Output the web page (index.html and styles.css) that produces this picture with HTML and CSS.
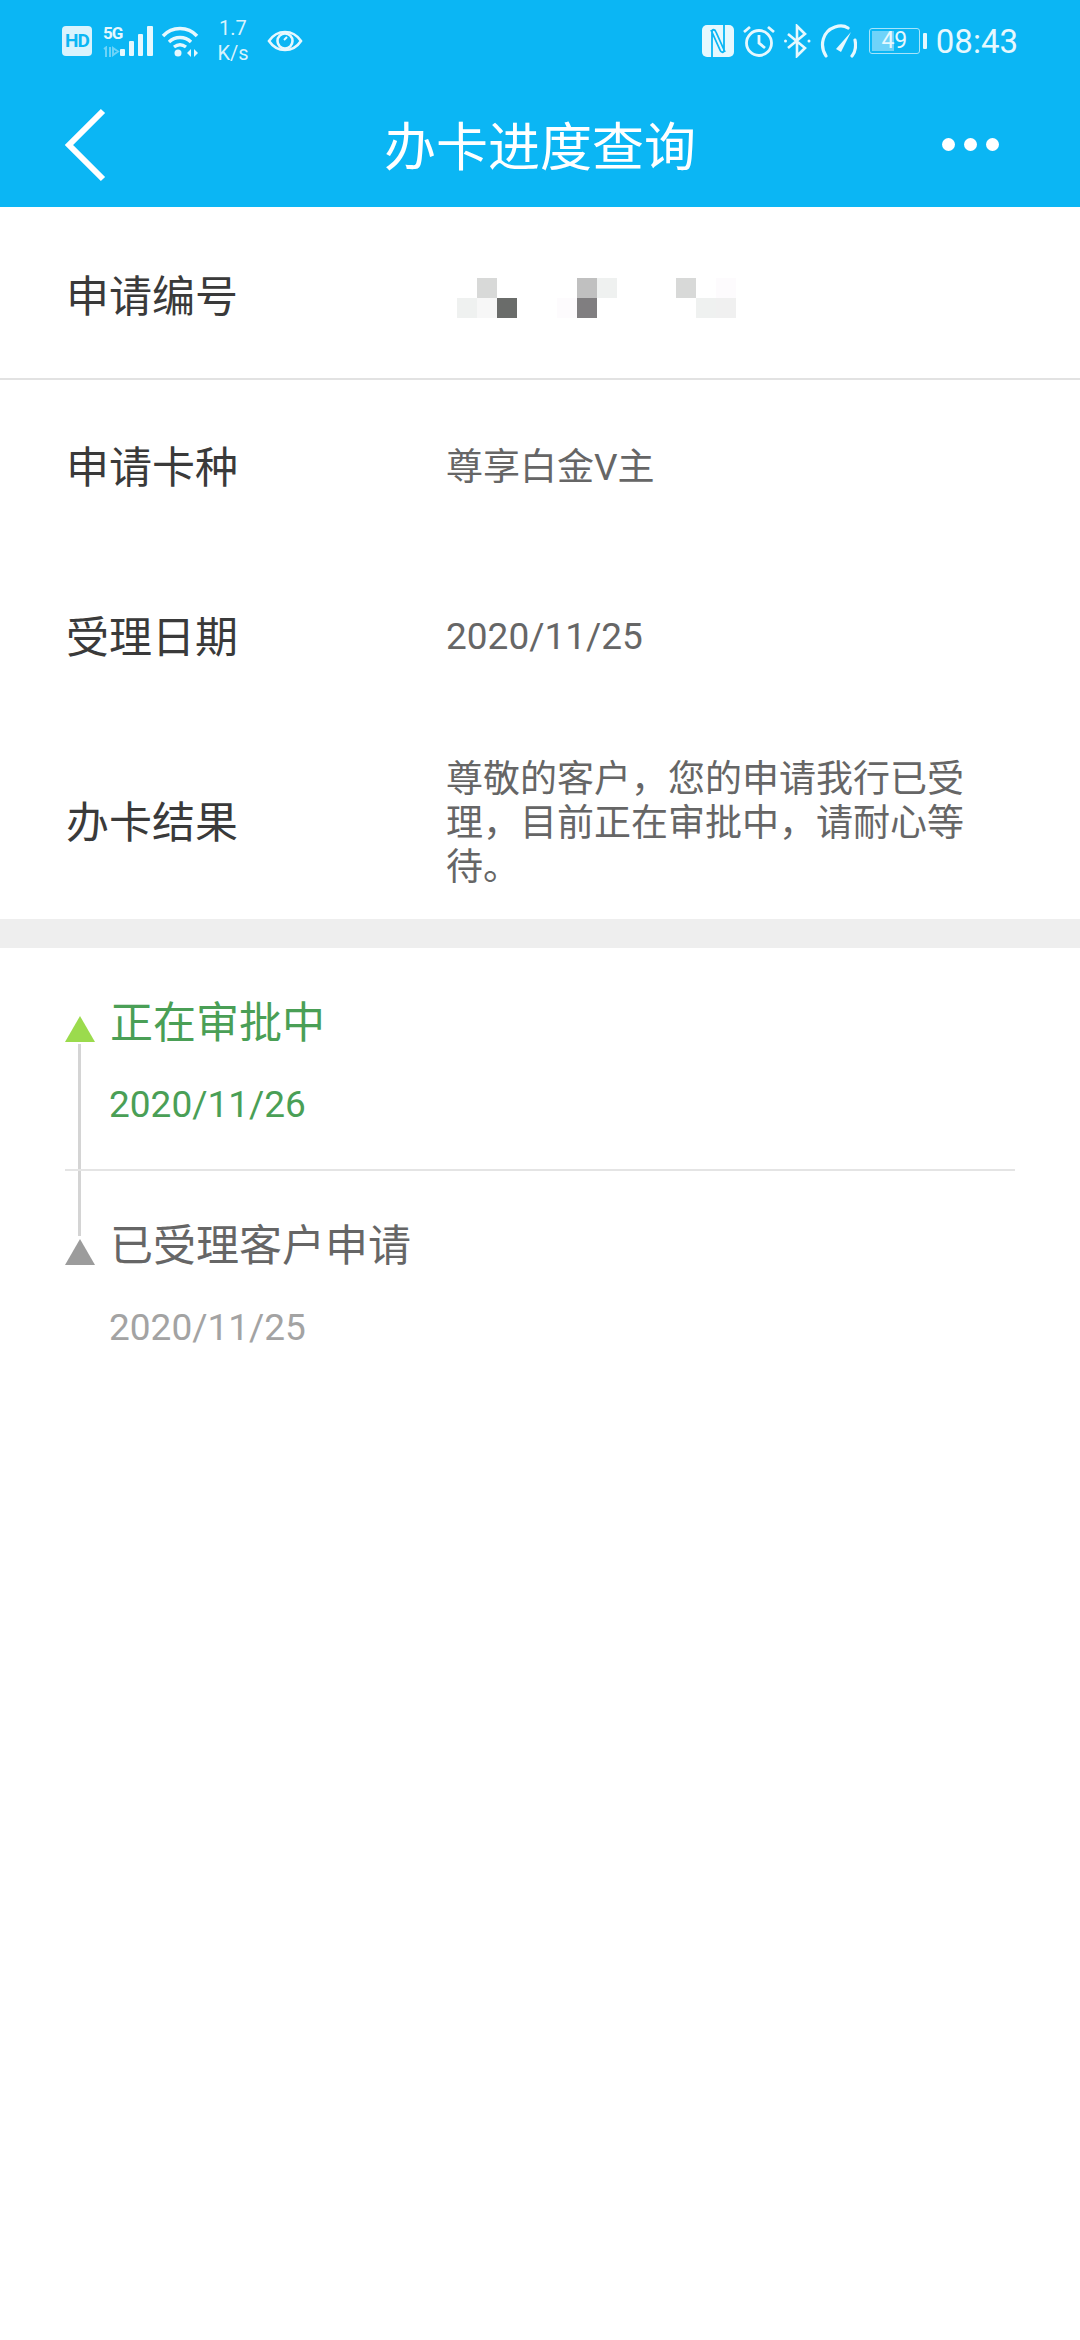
FILE: index.html
```html
<!DOCTYPE html>
<html lang="zh-CN">

<head>
    <meta charset="UTF-8">
    <meta name="viewport" content="width=device-width, initial-scale=1.0">
    <title>办卡进度查询</title>
    <link rel="stylesheet" href="styles.css">
</head>

<body>
    <header class="top">
        <div class="status-bar">
            <div class="status-left">
                <span class="hd-badge">HD</span>
                <div class="net-type">
                    <span>5G</span>
                    <svg width="17" height="11" viewBox="0 0 17 11">
                        <path d="M1 3l2 -1.500v9.500M7 1v10M10 2l5 3.500l-5 3.500z" fill="none" stroke="#fff" stroke-opacity=".4" stroke-width="2"/>
                    </svg>
                </div>
                <svg class="ic-bars" width="33" height="30" viewBox="0 0 33 30">
                    <rect x="0" y="23" width="5" height="7" rx="1" fill="#e6f8fe"/>
                    <rect x="9" y="15" width="5" height="15" rx="1" fill="#e6f8fe"/>
                    <rect x="18" y="8" width="5" height="22" rx="1" fill="#e6f8fe"/>
                    <rect x="27" y="0" width="6" height="30" rx="1" fill="#e6f8fe"/>
                </svg>
                <svg class="ic-wifi" width="38" height="32" viewBox="0 0 38 32">
                    <path d="M2 11C11 1 27 1 36 11M8 17c6 -6 16 -6 22 0M13 22c4 -3 8 -3 12 0" fill="none" stroke="#e6f8fe" stroke-width="3.400"/>
                    <circle cx="17" cy="28" r="3.500" fill="#e6f8fe"/>
                    <path d="M30 24v8l-4 -4zM33 24v8l4 -4z" fill="#e6f8fe"/>
                </svg>
                <div class="net-speed"><span>1.7</span><span>K/s</span></div>
                <svg class="ic-eye" width="36" height="28" viewBox="0 0 36 28">
                    <path d="M2 14C10 2 26 2 34 14C26 26 10 26 2 14Z" fill="none" stroke="#e6f8fe" stroke-width="2.600"/>
                    <circle cx="18" cy="14" r="7.500" fill="none" stroke="#e6f8fe" stroke-width="2.600"/>
                    <path d="M17 13l3 -3" stroke="#e6f8fe" stroke-width="2"/>
                </svg>
            </div>
            <div class="status-right">
                <svg width="32" height="32" viewBox="0 0 32 32">
                    <rect width="32" height="32" rx="5" fill="#e6f8fe"/>
                    <path d="M10 32V7C10 4 13 4 14 7L23 27M22 0V25C22 28 19 28 18 25L9 5" fill="none" stroke="#0bb6f4" stroke-width="1.800"/>
                </svg>
                <svg width="32" height="34" viewBox="0 0 32 34">
                    <circle cx="16" cy="19" r="12.500" fill="none" stroke="#e6f8fe" stroke-width="2.800"/>
                    <path d="M16 11v8l6 5M1 8l6 -5M31 8l-6 -5" fill="none" stroke="#e6f8fe" stroke-width="2.800"/>
                </svg>
                <svg width="27" height="34" viewBox="0 0 27 34">
                    <path d="M4 10l17 14l-8 8V2l8 8L4 24" fill="none" stroke="#e6f8fe" stroke-width="2.600"/>
                    <circle cx="1.500" cy="17" r="1.500" fill="#e6f8fe"/>
                    <circle cx="25" cy="17" r="1.500" fill="#e6f8fe"/>
                </svg>
                <svg width="37" height="34" viewBox="0 0 37 34">
                    <path d="M6 32C-1 21 3 7 15 3c6 -2 10 -1 13 1M35 16c1 5 1 11 -3 16" fill="none" stroke="#e6f8fe" stroke-width="3.200" stroke-linecap="round"/>
                    <path d="M16 25L31 8L21 28Z" fill="#e6f8fe"/>
                </svg>
                <div class="battery">
                    <div class="battery-box">
                        <span class="battery-fill"></span>
                        <span class="battery-num">49</span>
                    </div>
                    <span class="battery-tip"></span>
                </div>
                <span class="clock">08:43</span>
            </div>
        </div>
        <nav class="title-bar">
            <svg class="back" width="42" height="76" viewBox="0 0 42 76">
                <path d="M39 4L5 38L39 72" fill="none" stroke="#fff" stroke-width="6"/>
            </svg>
            <h1>办卡进度查询</h1>
            <div class="more"><i></i><i></i><i></i></div>
        </nav>
    </header>

    <section class="info">
        <div class="row row-first">
            <span class="label">申请编号</span>
            <div class="mosaic">
                <div class="mosaic-block">
                    <i></i><i class="m-d8"></i><i></i>
                    <i class="m-ef"></i><i class="m-f7"></i><i class="m-6a"></i>
                </div>
                <div class="mosaic-block">
                    <i></i><i class="m-c0"></i><i class="m-ef"></i>
                    <i class="m-fd"></i><i class="m-80"></i><i></i>
                </div>
                <div class="mosaic-block mosaic-last">
                    <i class="m-d8"></i><i></i><i class="m-fd"></i>
                    <i></i><i class="m-ef"></i><i class="m-f0"></i>
                </div>
            </div>
        </div>
        <div class="row row-card">
            <span class="label">申请卡种</span>
            <span class="value">尊享白金V主</span>
        </div>
        <div class="row row-date">
            <span class="label">受理日期</span>
            <span class="value">2020/11/25</span>
        </div>
        <div class="row row-result">
            <span class="label">办卡结果</span>
            <span class="value">尊敬的客户，您的申请我行已受理，目前正在审批中，请耐心等待。</span>
        </div>
    </section>

    <section class="timeline">
        <div class="track"></div>
        <div class="step step-now">
            <div class="step-title"><span class="arrow"></span>正在审批中</div>
            <div class="step-date">2020/11/26</div>
        </div>
        <div class="step step-old">
            <div class="step-title"><span class="arrow"></span>已受理客户申请</div>
            <div class="step-date">2020/11/25</div>
        </div>
    </section>
</body>

</html>
```

FILE: styles.css
```css
html,
body {
    margin: 0;
    padding: 0;
    background-color: #fff;
}

body {
    width: 1080px;
    height: 2340px;
    overflow: hidden;
    font-family: Roboto, "Noto Sans CJK SC", sans-serif;
}

.top {
    background-color: #0bb6f4;
    height: 207px;
    color: #fff;
}

.status-bar {
    height: 82px;
    padding: 0 62px;
    display: flex;
    justify-content: space-between;
    align-items: center;
}

.status-left,
.status-right {
    display: flex;
    align-items: center;
}

.hd-badge {
    width: 30px;
    height: 30px;
    border-radius: 4px;
    background-color: #d9f3fd;
    color: #0bb6f4;
    font-size: 19px;
    font-weight: 700;
    line-height: 30px;
    text-align: center;
    letter-spacing: -1px;
}

.net-type {
    width: 17px;
    margin-left: 11px;
    display: flex;
    flex-direction: column;
    gap: 6px;
    font-size: 17px;
    font-weight: 700;
    line-height: 14px;
    letter-spacing: -1px;
    color: #e6f8fe;
}

.ic-wifi {
    margin-left: 8px;
}

.net-speed {
    margin-left: 16px;
    width: 36px;
    display: flex;
    flex-direction: column;
    align-items: center;
    font-size: 20px;
    line-height: 25px;
    color: #d9f3fd;
}

.ic-eye {
    margin-left: 16px;
}

.status-right svg {
    margin-right: 9px;
}

.battery {
    display: flex;
    align-items: center;
    margin-left: 3px;
}

.battery-box {
    position: relative;
    width: 51px;
    height: 26px;
    border: 1px solid #a6e4fb;
    border-radius: 3px;
    box-sizing: border-box;
}

.battery-fill {
    position: absolute;
    left: 2px;
    top: 2px;
    bottom: 2px;
    width: 22px;
    background-color: #6fd3f9;
}

.battery-num {
    position: absolute;
    left: 0;
    right: 0;
    top: 0;
    text-align: center;
    font-size: 23px;
    line-height: 24px;
    color: #e6f8fe;
}

.battery-tip {
    width: 4px;
    height: 16px;
    margin-left: 3px;
    background-color: #e6f8fe;
    border-radius: 1px;
}

.clock {
    margin-left: 9px;
    font-size: 33px;
    color: #e6f8fe;
}

.title-bar {
    height: 125px;
    box-sizing: border-box;
    padding-bottom: 2px;
    position: relative;
    display: flex;
    align-items: center;
    justify-content: center;
}

.title-bar h1 {
    margin: 0;
    font-size: 52px;
    font-weight: 400;
    color: #fff;
}

.back {
    position: absolute;
    left: 64px;
    top: 25px;
}

.more {
    position: absolute;
    right: 81px;
    top: 56px;
    display: flex;
    gap: 9px;
}

.more i {
    width: 13px;
    height: 13px;
    border-radius: 50%;
    background-color: #fff;
}

.info {
    background-color: #fff;
}

.row {
    display: flex;
    align-items: center;
    padding-left: 66px;
}

.label {
    width: 380px;
    flex-shrink: 0;
    font-size: 43px;
    color: #3a3a3a;
}

.value {
    width: 530px;
    font-size: 37px;
    line-height: 44px;
    color: #666;
}

.row-first {
    height: 171px;
    border-bottom: 2px solid #e2e2e2;
}

.row-card {
    height: 175px;
}

.row-date {
    height: 165px;
}

.row-result {
    height: 199px;
}

.row-card .label,
.row-date .label {
    padding-bottom: 8px;
}

.row-date .value {
    padding-bottom: 2px;
}

.row-result .label {
    padding-bottom: 2px;
}

.row-result .value {
    padding-top: 8px;
}

.mosaic {
    display: flex;
    margin-left: 11px;
    margin-top: 10px;
}

.mosaic-block {
    display: grid;
    grid-template-columns: repeat(3, 20px);
    grid-auto-rows: 20px;
    margin-right: 40px;
}

.mosaic-last {
    margin-left: 19px;
}

.m-d8 { background-color: #d8d9d8; }
.m-ef { background-color: #eff1f0; }
.m-f7 { background-color: #f7f7f7; }
.m-f0 { background-color: #f0f0f0; }
.m-fd { background-color: #fdfbfd; }
.m-c0 { background-color: #c0c0c0; }
.m-80 { background-color: #807e80; }
.m-6a { background-color: #6a6c6a; }

.timeline {
    position: relative;
    border-top: 29px solid #eeeeee;
    padding: 0 65px;
}

.track {
    position: absolute;
    left: 78px;
    top: 96px;
    width: 3px;
    height: 192px;
    background-color: #d4d4d4;
}

.step {
    position: relative;
}

.step-now {
    height: 221px;
    border-bottom: 2px solid #e4e4e4;
}

.step-title {
    position: relative;
    padding-left: 45px;
    padding-top: 47px;
    font-size: 43px;
    line-height: 56px;
}

.step-date {
    padding-left: 44px;
    margin-top: 32px;
    font-size: 37px;
    line-height: 44px;
}

.arrow {
    position: absolute;
    left: 0;
    top: 68px;
    width: 0;
    height: 0;
    border-left: 15px solid transparent;
    border-right: 15px solid transparent;
    border-bottom: 26px solid #9bdb4d;
}

.step-now .step-title,
.step-now .step-date {
    color: #4a9f56;
}

.step-old .step-title {
    color: #666;
}

.step-old .step-date {
    color: #a3a3a3;
}

.step-old .arrow {
    border-bottom-color: #9c9c9c;
}
```
